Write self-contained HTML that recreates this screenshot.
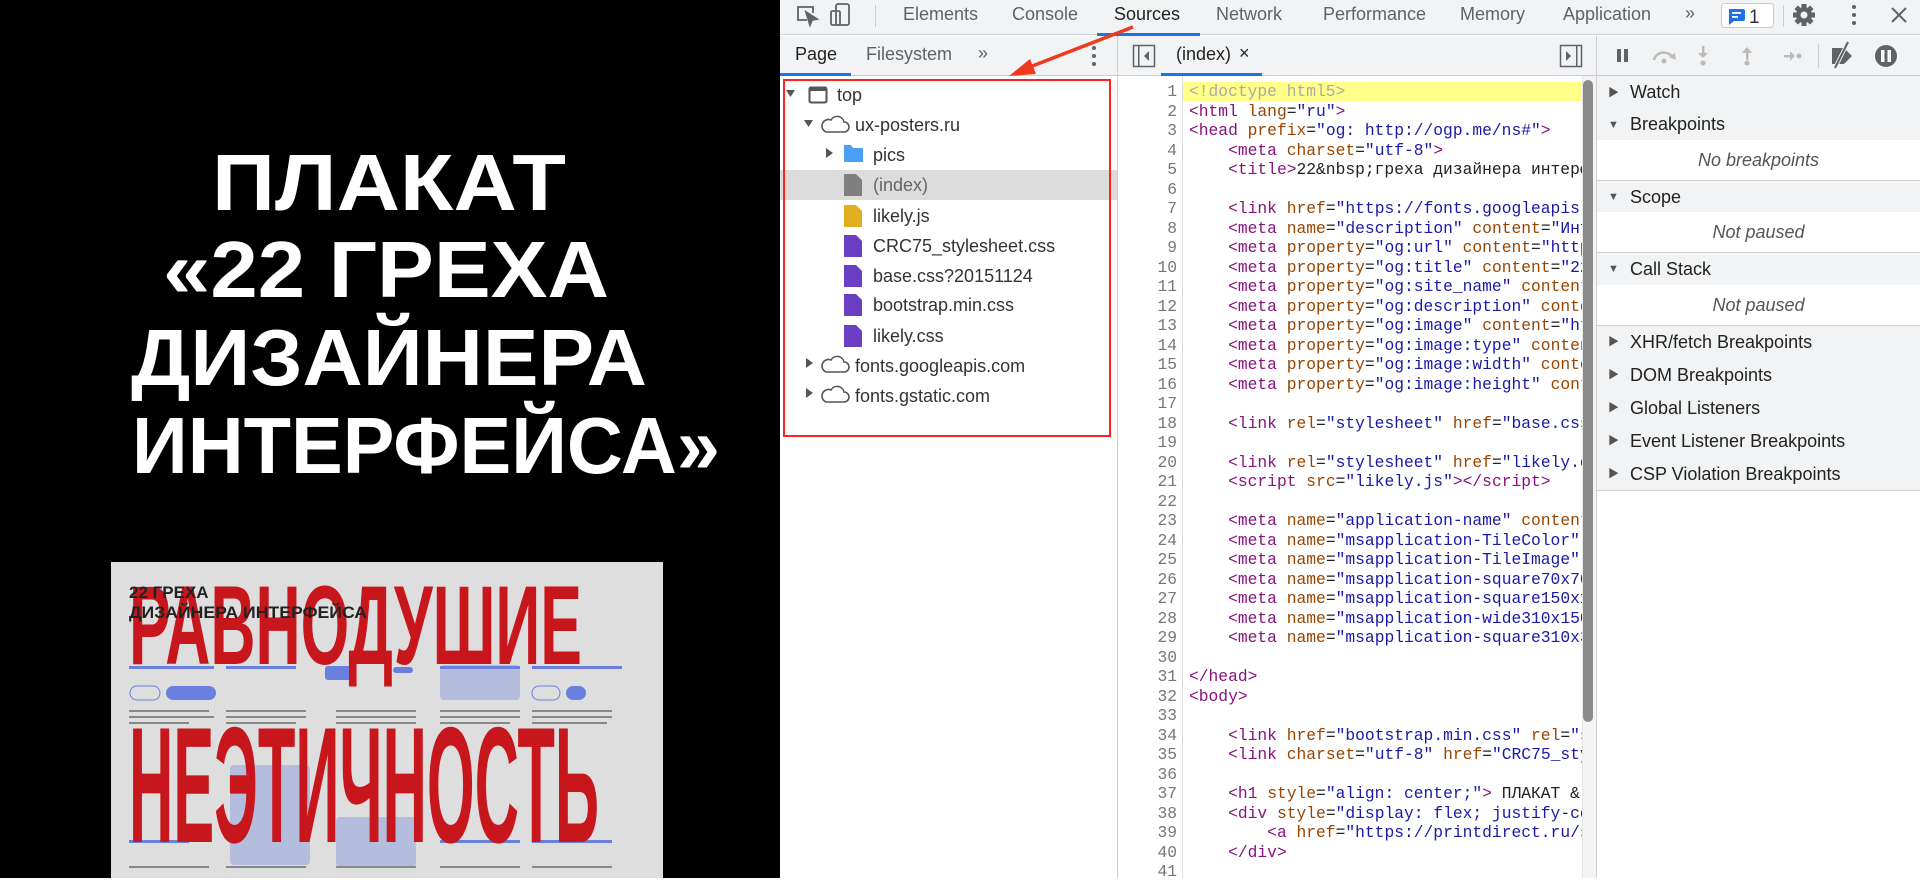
<!DOCTYPE html>
<html><head><meta charset="utf-8">
<style>
*{margin:0;padding:0;box-sizing:border-box}
body{width:1920px;height:878px;overflow:hidden;background:#fff;font-family:"Liberation Sans","Noto Sans CJK SC",sans-serif;position:relative}
.abs{position:absolute}
#left{left:0;top:0;width:780px;height:878px;background:#000}
.tb{color:#5f6368;font-size:18px;white-space:nowrap}
.code{font-family:"Liberation Mono","DejaVu Sans Mono",monospace;font-size:16.3px;line-height:19.5px;white-space:pre;color:#222}
.t{color:#881280}.a{color:#994500}.v{color:#1a1aa6}
.tree div{position:absolute;font-size:18px;color:#333;white-space:nowrap;height:30px;line-height:30px}
.sec{position:absolute;left:1597px;width:323px;background:#f1f3f4;border-bottom:1px solid #d0d0d0;font-size:18px;color:#222;line-height:32px;padding-left:33px}
.sec .tri{position:absolute;left:11px;top:0;font-size:11px;color:#555}
.body{position:absolute;left:1597px;width:323px;background:#fff;border-bottom:1px solid #d0d0d0;font-size:18px;font-style:italic;color:#555;text-align:center;line-height:40px}
</style></head><body>
<div id="left" class="abs">
<svg width="780" height="878" style="position:absolute;left:0;top:0">
<g fill="#fff" font-family="Liberation Sans" font-weight="bold" font-size="80" text-anchor="middle">
<text x="389" y="210" textLength="354" lengthAdjust="spacingAndGlyphs">ПЛАКАТ</text>
<text x="386" y="297" textLength="446" lengthAdjust="spacingAndGlyphs">«22 ГРЕХА</text>
<text x="389" y="385" textLength="516" lengthAdjust="spacingAndGlyphs">ДИЗАЙНЕРА</text>
<text x="426" y="473" textLength="588" lengthAdjust="spacingAndGlyphs">ИНТЕРФЕЙСА»</text>
</g>
<rect x="111" y="562" width="552" height="316" fill="#dedede"/>
<g fill="#5470e0" opacity="0.85">
<rect x="129" y="666" width="85" height="3"/><rect x="226" y="666" width="70" height="3"/><rect x="325" y="666" width="30" height="14" rx="3"/><rect x="393" y="667" width="20" height="6" rx="3"/><rect x="440" y="666" width="80" height="3"/><rect x="532" y="666" width="90" height="3"/>
<rect x="130" y="686" width="30" height="14" rx="7" fill="none" stroke="#5470e0"/><rect x="166" y="686" width="50" height="14" rx="7"/>
<rect x="532" y="686" width="28" height="14" rx="7" fill="none" stroke="#5470e0"/><rect x="566" y="686" width="20" height="14" rx="7"/>
<rect x="230" y="765" width="80" height="100" rx="4" opacity="0.35"/><rect x="336" y="817" width="80" height="50" rx="4" opacity="0.35"/><rect x="440" y="665" width="80" height="35" rx="4" opacity="0.35"/>
<rect x="129" y="840" width="60" height="3"/><rect x="440" y="840" width="80" height="3"/><rect x="532" y="840" width="80" height="3"/>
</g>
<g fill="#888">
<rect x="129" y="710" width="80" height="2"/><rect x="129" y="716" width="85" height="2"/><rect x="129" y="722" width="60" height="2"/>
<rect x="226" y="710" width="80" height="2"/><rect x="226" y="716" width="80" height="2"/><rect x="226" y="722" width="70" height="2"/>
<rect x="336" y="710" width="80" height="2"/><rect x="336" y="716" width="80" height="2"/><rect x="336" y="722" width="80" height="2"/>
<rect x="440" y="710" width="80" height="2"/><rect x="440" y="716" width="80" height="2"/><rect x="440" y="722" width="70" height="2"/>
<rect x="532" y="710" width="80" height="2"/><rect x="532" y="716" width="80" height="2"/><rect x="532" y="722" width="75" height="2"/>
<rect x="129" y="866" width="80" height="2"/><rect x="226" y="866" width="80" height="2"/><rect x="336" y="866" width="80" height="2"/><rect x="440" y="866" width="80" height="2"/><rect x="532" y="866" width="80" height="2"/>
</g>
<g fill="#c8161d" font-family="Liberation Sans" font-weight="bold">
<text x="129" y="664" font-size="112" textLength="453" lengthAdjust="spacingAndGlyphs">РАВНОДУШИЕ</text>
<text x="129" y="842" font-size="165" textLength="470" lengthAdjust="spacingAndGlyphs">НЕЭТИЧНОСТЬ</text>
</g>
<g fill="#222" font-family="Liberation Sans" font-weight="bold" font-size="17">
<text x="129" y="598">22 ГРЕХА</text>
<text x="129" y="618" textLength="238" lengthAdjust="spacingAndGlyphs">ДИЗАЙНЕРА ИНТЕРФЕЙСА</text>
</g>
</svg>
</div>

<div class="abs" style="left:780px;top:0;width:1140px;height:35px;background:#f1f3f4;border-bottom:1px solid #cbcdd1"></div>
<svg class="abs" style="left:780px;top:0" width="1140" height="80">
<g fill="none" stroke="#5f6368" stroke-width="1.8">
<path d="M27 20 H18 V7 H33 V13"/><path d="M26 12 L30 25 L32 20 L37 19 Z" fill="#5f6368"/>
<rect x="56" y="4" width="13" height="21" rx="2"/><rect x="51" y="11" width="9" height="14" rx="1.5"/>
</g>
<rect x="95" y="5" width="1" height="22" fill="#ccc"/>
<rect x="317" y="33" width="103" height="3" fill="#1a73e8"/>
<rect x="941.5" y="3.5" width="52" height="24" rx="3" fill="#fff" stroke="#ccc"/>
<path d="M949 9 h14 a2 2 0 0 1 2 2 v8 a2 2 0 0 1 -2 2 h-9 l-5 4 z" fill="#1a73e8"/>
<rect x="952" y="12" width="9" height="1.8" fill="#fff"/><rect x="952" y="16" width="6" height="1.8" fill="#fff"/>
<text x="969" y="23" font-family="Liberation Sans" font-size="19" fill="#333">1</text>
<rect x="1003" y="5" width="1" height="22" fill="#ccc"/>
<g transform="translate(1024,15)" fill="#5f6368"><circle r="8"/><g><rect x="-2.5" y="-11" width="5" height="22"/><rect x="-11" y="-2.5" width="22" height="5"/><rect x="-2.5" y="-11" width="5" height="22" transform="rotate(45)"/><rect x="-2.5" y="-11" width="5" height="22" transform="rotate(-45)"/></g><circle r="3.5" fill="#f1f3f4"/></g>
<g fill="#5f6368"><circle cx="1074" cy="7" r="2"/><circle cx="1074" cy="15" r="2"/><circle cx="1074" cy="23" r="2"/></g>
<path d="M1112 8 L1126 22 M1126 8 L1112 22" stroke="#5f6368" stroke-width="2"/>
</svg>
<div class="abs tb" style="left:903px;top:4px">Elements</div>
<div class="abs tb" style="left:1012px;top:4px">Console</div>
<div class="abs tb" style="left:1114px;top:4px;color:#222">Sources</div>
<div class="abs tb" style="left:1216px;top:4px">Network</div>
<div class="abs tb" style="left:1323px;top:4px">Performance</div>
<div class="abs tb" style="left:1460px;top:4px">Memory</div>
<div class="abs tb" style="left:1563px;top:4px">Application</div>
<div class="abs tb" style="left:1685px;top:3px">»</div>

<div class="abs" style="left:780px;top:36px;width:1140px;height:40px;background:#f1f3f4;border-bottom:1px solid #cbcdd1"></div>
<div class="abs" style="left:1117px;top:36px;width:1px;height:842px;background:#cbcdd1"></div>
<div class="abs" style="left:1596px;top:36px;width:1px;height:842px;background:#cbcdd1"></div>
<div class="abs tb" style="left:795px;top:44px;color:#222">Page</div>
<div class="abs tb" style="left:866px;top:44px">Filesystem</div>
<div class="abs tb" style="left:978px;top:43px">»</div>
<div class="abs" style="left:780px;top:73px;width:71px;height:3px;background:#1a73e8"></div>
<div class="abs tb" style="left:1176px;top:44px;color:#222">(index)</div>
<div class="abs tb" style="left:1239px;top:43px;color:#222">×</div>
<div class="abs" style="left:1161px;top:73px;width:101px;height:3px;background:#1a73e8"></div>
<svg class="abs" style="left:780px;top:36px" width="1140" height="40">
<g fill="#5f6368"><circle cx="314" cy="12" r="2"/><circle cx="314" cy="20" r="2"/><circle cx="314" cy="28" r="2"/></g>
<rect x="353.5" y="9.5" width="21" height="21" fill="none" stroke="#5f6368" stroke-width="1.5"/><rect x="358" y="10" width="1.5" height="20" fill="#5f6368"/><path d="M369 15 L364 20 L369 25Z" fill="#5f6368"/>
<rect x="780.5" y="9.5" width="21" height="21" fill="none" stroke="#5f6368" stroke-width="1.5"/><rect x="796" y="10" width="1.5" height="20" fill="#5f6368"/><path d="M786 15 L791 20 L786 25Z" fill="#5f6368"/>
<rect x="837" y="13" width="4" height="13" fill="#5f6368"/><rect x="844" y="13" width="4" height="13" fill="#5f6368"/>
<g fill="none" stroke="#bbb" stroke-width="2.5"><path d="M874 24 a10 9 0 0 1 19 -2"/></g><path d="M889 21 l7 3 l-1 -7z" fill="#bbb"/><circle cx="884" cy="25" r="2.5" fill="#bbb"/>
<g fill="#bbb"><rect x="922" y="10" width="2.5" height="10"/><path d="M918 17 h10 l-5 5z"/><circle cx="923" cy="27" r="2.5"/>
<rect x="966" y="14" width="2.5" height="10"/><path d="M962 17 h10 l-5 -6z"/><circle cx="967" cy="27" r="2.5"/>
<rect x="1004" y="19" width="8" height="2.5"/><path d="M1010 15 v10 l5 -5z"/><circle cx="1019" cy="20" r="2.5"/></g>
<rect x="1038" y="8" width="1" height="24" fill="#ccc"/>
<path d="M1052 12 h12 l8 8 l-8 8 h-12z" fill="#5f6368"/><path d="M1055 32 L1068 6" stroke="#f1f3f4" stroke-width="4"/><path d="M1055 32 L1068 6" stroke="#5f6368" stroke-width="2"/>
<circle cx="1106" cy="20" r="11" fill="#5f6368"/><rect x="1101" y="14" width="3.5" height="12" fill="#fff"/><rect x="1107.5" y="14" width="3.5" height="12" fill="#fff"/>
</svg>

<div class="abs" style="left:780px;top:170px;width:337px;height:30px;background:#dcdcdc"></div>
<svg class="abs" style="left:780px;top:76px" width="337" height="360">
<g fill="#555"><path d="M6 14 h9 l-4.5 7z"/><path d="M24 44 h9 l-4.5 7z"/><path d="M46 72 v10 l7 -5z"/><path d="M26 282 v10 l7 -5z"/><path d="M26 312 v10 l7 -5z"/></g>
<rect x="29.5" y="11.5" width="17" height="15" rx="1.5" fill="none" stroke="#555" stroke-width="2"/><rect x="30" y="12" width="16" height="3" fill="#555"/>
<g fill="none" stroke="#555" stroke-width="1.6">
<path d="M46 56 h18 a5 5 0 0 0 0 -10 a7 7 0 0 0 -13 -2 a6 6 0 0 0 -5 12z"/>
<path d="M46 296 h18 a5 5 0 0 0 0 -10 a7 7 0 0 0 -13 -2 a6 6 0 0 0 -5 12z"/>
<path d="M46 326 h18 a5 5 0 0 0 0 -10 a7 7 0 0 0 -13 -2 a6 6 0 0 0 -5 12z"/>
</g>
<path d="M64 69 h7 l2 3 h10 v14 h-19z" fill="#4a9ff5"/>
<g><path d="M64 98 h12 l6 6 v16 h-18z" fill="#7f7f7f"/>
<path d="M64 129 h12 l6 6 v16 h-18z" fill="#e0b020"/>
<path d="M64 159 h12 l6 6 v16 h-18z" fill="#6a3fc4"/>
<path d="M64 189 h12 l6 6 v16 h-18z" fill="#6a3fc4"/>
<path d="M64 218 h12 l6 6 v16 h-18z" fill="#6a3fc4"/>
<path d="M64 249 h12 l6 6 v16 h-18z" fill="#6a3fc4"/></g>
</svg>
<div class="tree">
<div style="left:837px;top:80px">top</div>
<div style="left:855px;top:110px">ux-posters.ru</div>
<div style="left:873px;top:140px">pics</div>
<div style="left:873px;top:170px;color:#666">(index)</div>
<div style="left:873px;top:201px">likely.js</div>
<div style="left:873px;top:231px">CRC75_stylesheet.css</div>
<div style="left:873px;top:261px">base.css?20151124</div>
<div style="left:873px;top:290px">bootstrap.min.css</div>
<div style="left:873px;top:321px">likely.css</div>
<div style="left:855px;top:351px">fonts.googleapis.com</div>
<div style="left:855px;top:381px">fonts.gstatic.com</div>
</div>
<div class="abs" style="left:783px;top:79px;width:328px;height:358px;border:2.5px solid #f22"></div>

<div class="abs" style="left:1182px;top:76px;width:1px;height:802px;background:#ddd"></div>
<div class="abs" style="left:1183px;top:82px;width:400px;height:19px;background:#ffff8a"></div>
<div class="abs code" style="left:1130px;top:82px;width:47px;text-align:right;color:#777">1
2
3
4
5
6
7
8
9
10
11
12
13
14
15
16
17
18
19
20
21
22
23
24
25
26
27
28
29
30
31
32
33
34
35
36
37
38
39
40
41</div>
<div class="abs code" style="left:1189px;top:82px;width:393px;height:796px;overflow:hidden"><span style="color:#aaa">&lt;!doctype html5&gt;</span>
<span class="t">&lt;html</span> <span class="a">lang</span>=<span class="v">"ru"</span><span class="t">&gt;</span>
<span class="t">&lt;head</span> <span class="a">prefix</span>=<span class="v">"og: http://ogp.me/ns#"</span><span class="t">&gt;</span>
    <span class="t">&lt;meta</span> <span class="a">charset</span>=<span class="v">"utf-8"</span><span class="t">&gt;</span>
    <span class="t">&lt;title&gt;</span>22&amp;nbsp;греха дизайнера интерфейса
 
    <span class="t">&lt;link</span> <span class="a">href</span>=<span class="v">"https://fonts.googleapis.com</span>
    <span class="t">&lt;meta</span> <span class="a">name</span>=<span class="v">"description"</span> <span class="a">content</span>=<span class="v">"Интерфейс</span>
    <span class="t">&lt;meta</span> <span class="a">property</span>=<span class="v">"og:url"</span> <span class="a">content</span>=<span class="v">"https://</span>
    <span class="t">&lt;meta</span> <span class="a">property</span>=<span class="v">"og:title"</span> <span class="a">content</span>=<span class="v">"22 греха</span>
    <span class="t">&lt;meta</span> <span class="a">property</span>=<span class="v">"og:site_name"</span> <span class="a">content</span>=<span class="v">"</span>
    <span class="t">&lt;meta</span> <span class="a">property</span>=<span class="v">"og:description"</span> <span class="a">content</span>
    <span class="t">&lt;meta</span> <span class="a">property</span>=<span class="v">"og:image"</span> <span class="a">content</span>=<span class="v">"https</span>
    <span class="t">&lt;meta</span> <span class="a">property</span>=<span class="v">"og:image:type"</span> <span class="a">content</span>
    <span class="t">&lt;meta</span> <span class="a">property</span>=<span class="v">"og:image:width"</span> <span class="a">content</span>
    <span class="t">&lt;meta</span> <span class="a">property</span>=<span class="v">"og:image:height"</span> <span class="a">content</span>
 
    <span class="t">&lt;link</span> <span class="a">rel</span>=<span class="v">"stylesheet"</span> <span class="a">href</span>=<span class="v">"base.css?2015</span>
 
    <span class="t">&lt;link</span> <span class="a">rel</span>=<span class="v">"stylesheet"</span> <span class="a">href</span>=<span class="v">"likely.css"</span>
    <span class="t">&lt;script</span> <span class="a">src</span>=<span class="v">"likely.js"</span><span class="t">&gt;&lt;/script&gt;</span>
 
    <span class="t">&lt;meta</span> <span class="a">name</span>=<span class="v">"application-name"</span> <span class="a">content</span>
    <span class="t">&lt;meta</span> <span class="a">name</span>=<span class="v">"msapplication-TileColor"</span>
    <span class="t">&lt;meta</span> <span class="a">name</span>=<span class="v">"msapplication-TileImage"</span>
    <span class="t">&lt;meta</span> <span class="a">name</span>=<span class="v">"msapplication-square70x70logo"</span>
    <span class="t">&lt;meta</span> <span class="a">name</span>=<span class="v">"msapplication-square150x150logo"</span>
    <span class="t">&lt;meta</span> <span class="a">name</span>=<span class="v">"msapplication-wide310x150logo"</span>
    <span class="t">&lt;meta</span> <span class="a">name</span>=<span class="v">"msapplication-square310x310logo"</span>
 
<span class="t">&lt;/head&gt;</span>
<span class="t">&lt;body&gt;</span>
 
    <span class="t">&lt;link</span> <span class="a">href</span>=<span class="v">"bootstrap.min.css"</span> <span class="a">rel</span>=<span class="v">"stylesheet"</span>
    <span class="t">&lt;link</span> <span class="a">charset</span>=<span class="v">"utf-8"</span> <span class="a">href</span>=<span class="v">"CRC75_stylesheet.css"</span>
 
    <span class="t">&lt;h1</span> <span class="a">style</span>=<span class="v">"align: center;"</span><span class="t">&gt;</span> ПЛАКАТ &amp;laquo;22
    <span class="t">&lt;div</span> <span class="a">style</span>=<span class="v">"display: flex; justify-content</span>
        <span class="t">&lt;a</span> <span class="a">href</span>=<span class="v">"https://printdirect.ru/s</span>
    <span class="t">&lt;/div&gt;</span>
 </div>
<div class="abs" style="left:1582px;top:76px;width:14px;height:802px;background:#f4f4f4;border-left:1px solid #e6e6e6"></div>
<div class="abs" style="left:1583px;top:80px;width:10px;height:642px;background:#8a8a8a;border-radius:5px"></div>

<div class="sec" style="top:76px;height:33px"><span class="tri" style="top:1px">▶</span>Watch</div>
<div class="sec" style="top:108px;height:33px"><span class="tri" style="top:1px">▼</span>Breakpoints</div>
<div class="body" style="top:140px;height:41px">No breakpoints</div>
<div class="sec" style="top:181px;height:32px"><span class="tri">▼</span>Scope</div>
<div class="body" style="top:212px;height:41px">Not paused</div>
<div class="sec" style="top:253px;height:33px"><span class="tri">▼</span>Call Stack</div>
<div class="body" style="top:285px;height:41px">Not paused</div>
<div class="sec" style="top:326px;height:34px"><span class="tri">▶</span>XHR/fetch Breakpoints</div>
<div class="sec" style="top:359px;height:34px"><span class="tri">▶</span>DOM Breakpoints</div>
<div class="sec" style="top:392px;height:34px"><span class="tri">▶</span>Global Listeners</div>
<div class="sec" style="top:425px;height:34px"><span class="tri">▶</span>Event Listener Breakpoints</div>
<div class="sec" style="top:458px;height:33px"><span class="tri">▶</span>CSP Violation Breakpoints</div>
<div class="abs" style="left:1597px;top:491px;width:323px;height:387px;background:#fff"></div>

<svg class="abs" style="left:0;top:0" width="1920" height="878">
<path d="M1133 27 L1022 70" stroke="#f03a1e" stroke-width="3.5"/>
<path d="M1009 76 L1030 59 L1036 74 Z" fill="#f03a1e"/>
</svg>
</body></html>
